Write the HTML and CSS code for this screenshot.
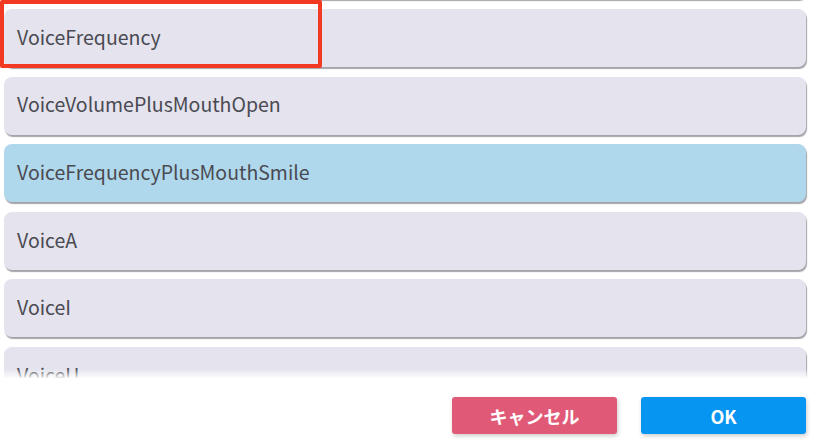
FILE: index.html
```html
<!DOCTYPE html>
<html lang="ja">
<head>
<meta charset="utf-8">
<link rel="stylesheet" href="styles.css">
</head>
<body>
<div class="dialog">
  <div class="viewport">
    <div class="list">
      <div class="item">VoiceVolume</div>
      <div class="item">VoiceFrequency</div>
      <div class="item">VoiceVolumePlusMouthOpen</div>
      <div class="item selected">VoiceFrequencyPlusMouthSmile</div>
      <div class="item">VoiceA</div>
      <div class="item">VoiceI</div>
      <div class="item">VoiceU</div>
    </div>
    <div class="fade"></div>
    <div class="highlight"></div>
  </div>
  <div class="actions">
    <button class="btn cancel">キャンセル</button>
    <button class="btn ok">OK</button>
  </div>
</div>
</body>
</html>
```
FILE: styles.css
```css
html, body {
  margin: 0;
  padding: 0;
  background: #ffffff;
}
body {
  width: 824px;
  height: 444px;
  overflow: hidden;
  font-family: "Noto Sans CJK JP", "Noto Sans", sans-serif;
}
.dialog {
  display: flex;
  flex-direction: column;
  height: 444px;
}
.viewport {
  position: relative;
  height: 378px;
  overflow: hidden;
}
.list {
  display: flex;
  flex-direction: column;
  gap: 9.6px;
  margin-top: -58.6px;
  padding: 0 18px 0 4px;
}
.item {
  height: 58px;
  display: flex;
  align-items: center;
  padding: 0 0 3px 13px;
  box-sizing: border-box;
  font-size: 19.5px;
  line-height: 1;
  color: #4a4a52;
  background: #e4e3ee;
  border-radius: 8px;
  box-shadow: 1px 2px 1px rgba(90, 90, 100, 0.55);
  flex-shrink: 0;
}
.item.selected {
  background: #b0d8ec;
}
.fade {
  position: absolute;
  left: 0;
  right: 0;
  bottom: 0;
  height: 9px;
  background: linear-gradient(to bottom, rgba(255,255,255,0), rgba(255,255,255,0.9));
}
.highlight {
  position: absolute;
  left: 0;
  top: 0;
  width: 314px;
  height: 60px;
  border: 4.5px solid #f23a22;
  border-radius: 2px;
}
.actions {
  display: flex;
  justify-content: flex-end;
  gap: 24px;
  padding: 19px 18px 0 0;
}
.btn {
  width: 165px;
  height: 37px;
  padding: 0;
  border: none;
  border-radius: 3px;
  color: #ffffff;
  font-family: "Noto Sans CJK JP", "Noto Sans", sans-serif;
  font-weight: 700;
  font-size: 18px;
  line-height: 1;
  box-shadow: 1px 2px 4px rgba(0, 0, 0, 0.2);
}
.btn.cancel {
  background: #e05a78;
}
.btn.ok {
  background: #0795f2;
}
```
